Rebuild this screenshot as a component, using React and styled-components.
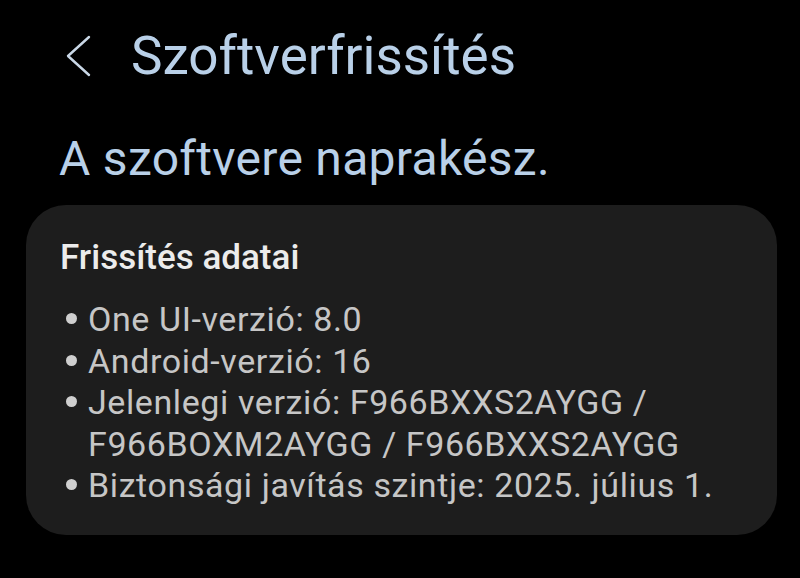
import React from "react";
import styled, { createGlobalStyle } from "styled-components";

const GlobalStyle = createGlobalStyle`
  html, body {
    margin: 0;
    padding: 0;
    background: #000;
  }
  body {
    font-family: Roboto, "Noto Sans", sans-serif;
  }
`;

const items = [
  "One UI-verzió: 8.0",
  "Android-verzió: 16",
  "Jelenlegi verzió: F966BXXS2AYGG / F966BOXM2AYGG / F966BXXS2AYGG",
  "Biztonsági javítás szintje: 2025. július 1.",
];

const App = () => {
  return (
    <Screen>
      <GlobalStyle />
      <Header>
        <BackButton aria-label="Vissza">
          <svg width="28" height="44" viewBox="0 0 28 44" fill="none">
            <path
              d="M24 3 L3 22 L24 41"
              stroke="#c9d7e6"
              strokeWidth="2.4"
              strokeLinecap="round"
              strokeLinejoin="round"
            />
          </svg>
        </BackButton>
        <Title>Szoftverfrissítés</Title>
      </Header>
      <Status>A szoftvere naprakész.</Status>
      <Card>
        <CardTitle>Frissítés adatai</CardTitle>
        <List>
          {items.map((text) => (
            <Item key={text}>
              <Bullet />
              <ItemText>{text}</ItemText>
            </Item>
          ))}
        </List>
      </Card>
    </Screen>
  );
};

export default App;

const Screen = styled.div`
  width: 800px;
  height: 578px;
  background: #000;
  overflow: hidden;
  display: flex;
  flex-direction: column;
`;

const Header = styled.div`
  display: flex;
  align-items: center;
  padding: 26px 0 0 65px;
  height: 60px;
`;

const BackButton = styled.div`
  width: 28px;
  height: 44px;
  display: flex;
  margin-right: 38px;
`;

const Title = styled.h1`
  margin: 0;
  font-size: 53px;
  line-height: 60px;
  font-weight: 400;
  color: #b9d0e8;
  letter-spacing: 0;
`;

const Status = styled.h2`
  margin: 46px 0 0 59px;
  font-size: 48px;
  line-height: 54px;
  font-weight: 400;
  color: #b9d0e8;
  letter-spacing: 0.3px;
`;

const Card = styled.div`
  margin: 19px 0 0 26px;
  width: 751px;
  box-sizing: border-box;
  background: #1d1d1d;
  border-radius: 40px;
  padding: 32px 30px 28px 34px;
`;

const CardTitle = styled.h3`
  margin: 0;
  font-size: 35px;
  line-height: 42px;
  font-weight: 500;
  color: #ececec;
  letter-spacing: 0;
`;

const List = styled.ul`
  list-style: none;
  margin: 20px 0 0;
  padding: 0;
`;

const Item = styled.li`
  display: flex;
  align-items: flex-start;
`;

const Bullet = styled.span`
  flex: none;
  width: 11px;
  height: 11px;
  border-radius: 50%;
  background: #cfcfcf;
  margin: 14px 11px 0 6px;
`;

const ItemText = styled.span`
  font-size: 34px;
  line-height: 41.5px;
  color: #c6c6c6;
  letter-spacing: 0.6px;
`;
